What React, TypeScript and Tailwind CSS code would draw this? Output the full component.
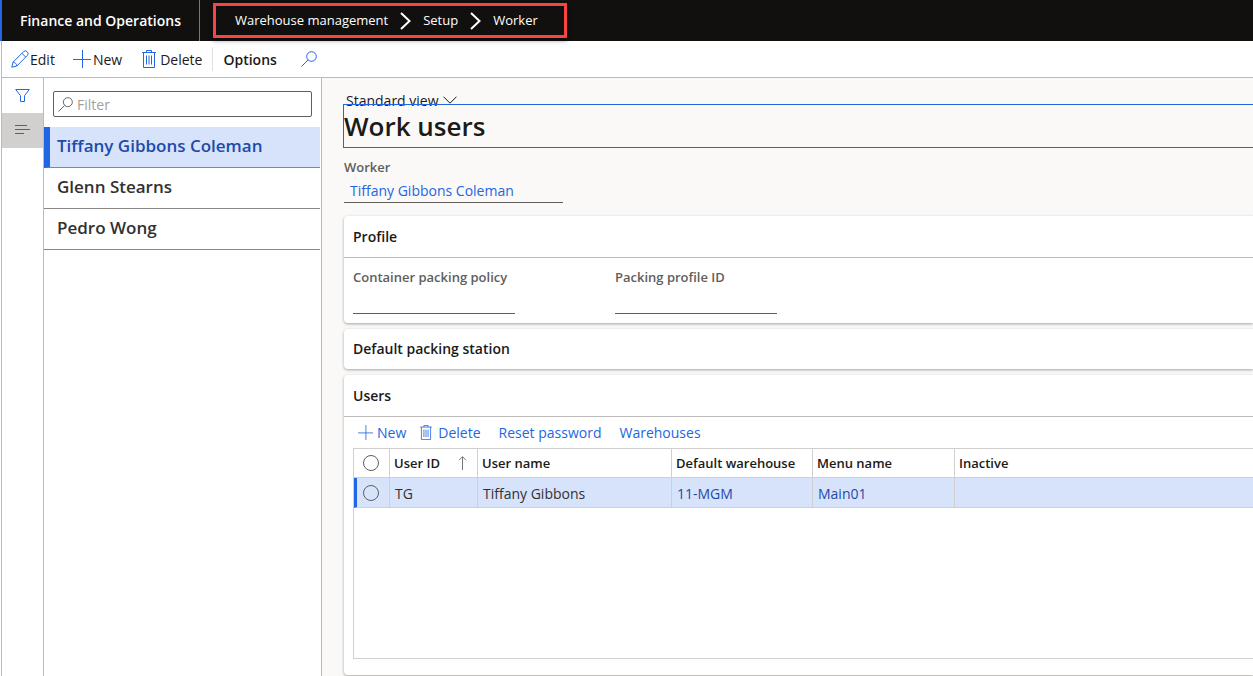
import React, { useState } from 'react';

type IconProps = { className?: string };

const workers = ['Tiffany Gibbons Coleman', 'Glenn Stearns', 'Pedro Wong'];

const users = [
  { id: 'TG', name: 'Tiffany Gibbons', warehouse: '11-MGM', menu: 'Main01', inactive: '' },
];

function PencilIcon({ className }: IconProps) {
  return (
    <svg viewBox="0 0 18 18" fill="none" stroke="currentColor" className={className} aria-hidden="true">
      <path d="M0.8 17.2 2 12.2 12.6 1.6a2.3 2.3 0 0 1 3.3 0l.5.5a2.3 2.3 0 0 1 0 3.3L5.8 16 0.8 17.2ZM2 12.2c2.2.1 3.7 1.6 3.8 3.8M10.9 3.3l3.8 3.8" />
    </svg>
  );
}

function PlusIcon({ className }: IconProps) {
  return (
    <svg viewBox="0 0 18 18" fill="none" stroke="currentColor" className={className} aria-hidden="true">
      <path d="M9.5 0v18M0 9.5h18" />
    </svg>
  );
}

function TrashIcon({ className }: IconProps) {
  return (
    <svg viewBox="0 0 14 18" fill="none" stroke="currentColor" className={className} aria-hidden="true">
      <path d="M0 2.5h14M4.5 2.5v-2h5v2M1.5 2.5v15h11v-15M4.5 5.5v9M7 5.5v9M9.5 5.5v9" />
    </svg>
  );
}

function SearchIcon({ className }: IconProps) {
  return (
    <svg viewBox="0 0 16 16" fill="none" stroke="currentColor" className={className} aria-hidden="true">
      <circle cx="10.5" cy="5.5" r="4.8" />
      <path d="M7.1 8.9.5 15.5" />
    </svg>
  );
}

function FunnelIcon({ className }: IconProps) {
  return (
    <svg viewBox="0 0 15 13" fill="none" stroke="currentColor" className={className} aria-hidden="true">
      <path d="M.7.5h13.6L9.5 6.7v5.8h-4V6.7L.7.5Z" />
    </svg>
  );
}

function LinesIcon({ className }: IconProps) {
  return (
    <svg viewBox="0 0 15 11" className={className} aria-hidden="true">
      <path fill="currentColor" d="M0 0h12v1H0zM0 4h15v1H0zM0 8h9v1H0z" />
    </svg>
  );
}

function ChevronRight({ className }: IconProps) {
  return (
    <svg viewBox="0 0 11 18" fill="none" stroke="currentColor" strokeWidth="2" className={className} aria-hidden="true">
      <path d="M1 1l8.5 8L1 17" />
    </svg>
  );
}

function ChevronDown({ className }: IconProps) {
  return (
    <svg viewBox="0 0 14 8" fill="none" stroke="currentColor" className={className} aria-hidden="true">
      <path d="M.5.7 7 7.2 13.5.7" />
    </svg>
  );
}

function SortIcon({ className }: IconProps) {
  return (
    <svg viewBox="0 0 9 14" fill="none" stroke="currentColor" className={className} aria-hidden="true">
      <path d="M4.5 14V.7M1 4.2 4.5.7 8 4.2" />
    </svg>
  );
}

function Card({ title, open, className, children }: { title: string; open?: boolean; className?: string; children?: React.ReactNode }) {
  return (
    <section className={`rounded-l-sm bg-white shadow-[0_1px_3px_rgba(0,0,0,0.35)] ${className ?? ''}`}>
      <h2 className={`flex items-center px-[9px] text-sm font-semibold ${open ? 'h-[42px] border-b border-[#bdbbb9]' : 'h-10'}`}>
        {title}
      </h2>
      {children}
    </section>
  );
}

function Field({ id, label }: { id: string; label: string }) {
  return (
    <div className="flex w-[162px] flex-col">
      <label htmlFor={id} className="text-[13px] leading-5 font-semibold whitespace-nowrap text-[#605e5c]">{label}</label>
      <input id={id} type="text" className="h-[27px] w-full border-b border-[#605e5c] bg-transparent text-sm outline-none" />
    </div>
  );
}

const headCell = 'border-r border-b border-[#d2d0ce] px-1 text-left font-semibold whitespace-nowrap';
const bodyCell = 'border-r border-b border-[#d2d0ce] px-[5px] pt-0.5';
const tick = 'block size-4 appearance-none rounded-full border border-[#605e5c]';

export default function App() {
  const [selected, setSelected] = useState(workers[0]);
  const [filter, setFilter] = useState('');

  const visible = workers.filter(w => w.toLowerCase().includes(filter.toLowerCase()));

  return (
    <div className="flex min-h-screen flex-col overflow-hidden bg-white font-['Open_Sans','Noto_Sans',sans-serif] text-sm text-[#1b1a19]">
      <header className="flex h-[41px] items-center border-l-2 border-[#2266e3] bg-[#11100f] text-white">
        <div className="flex h-full items-center border-r border-[#797775] px-[18px] text-sm font-semibold">
          Finance and Operations
        </div>
        <nav aria-label="Breadcrumb" className="z-10 ml-[13px] flex h-[35px] items-center gap-3 border-3 border-[#fa4343] pr-[26px] pl-[19px] text-[13px] shadow-[0_3px_4px_rgba(0,0,0,0.35)]">
          <a href="#warehouse">Warehouse management</a>
          <ChevronRight className="h-[18px] w-[11px]" />
          <a href="#setup">Setup</a>
          <ChevronRight className="h-[18px] w-[11px]" />
          <a href="#worker">Worker</a>
        </nav>
      </header>

      <div className="ml-px flex flex-1 flex-col border-l border-[#bdbbb9]">
        <div className="flex h-[37px] items-center border-b border-[#bdbbb9] pl-[9px]">
          <button className="flex items-center gap-px">
            <PencilIcon className="size-[18px] text-[#2266e3]" />
            <span className="pt-0.5">Edit</span>
          </button>
          <button className="ml-[18px] flex items-center gap-0.5">
            <PlusIcon className="size-[18px] text-[#2266e3]" />
            <span className="pt-0.5">New</span>
          </button>
          <button className="ml-5 flex items-center gap-1">
            <TrashIcon className="h-[18px] w-3.5 text-[#2266e3]" />
            <span className="pt-0.5">Delete</span>
          </button>
          <span className="ml-2.5 h-6 w-px bg-[#e1dfdd]" />
          <button className="ml-2.5 pt-0.5 font-semibold">Options</button>
          <button aria-label="Search" className="ml-6 text-[#2266e3]">
            <SearchIcon className="size-4" />
          </button>
        </div>

        <div className="flex flex-1">
          <div className="flex w-[42px] shrink-0 flex-col border-r border-[#bdbbb9]">
            <button aria-label="Show filters" className="flex h-[35px] items-center justify-center">
              <FunnelIcon className="h-[13px] w-[15px] text-[#2266e3]" />
            </button>
            <button aria-label="Show list" className="flex h-[35px] items-center justify-center bg-[#d2d0ce]">
              <LinesIcon className="h-[11px] w-[15px] text-[#2266e3]" />
            </button>
          </div>

          <aside className="w-[278px] shrink-0 border-r border-[#bdbbb9] pr-px">
            <div className="mt-[13px] mr-2 mb-[10px] ml-[9px] flex h-[26px] items-center gap-1 rounded-xs border border-[#605e5c] px-1">
              <SearchIcon className="size-[15px] shrink-0 text-[#605e5c]" />
              <input
                aria-label="Filter"
                placeholder="Filter"
                value={filter}
                onChange={(e) => setFilter(e.target.value)}
                className="w-full bg-transparent pt-0.5 text-sm outline-none placeholder:text-[#a19f9d]"
              />
            </div>
            <ul>
              {visible.map(worker => (
                <li key={worker}>
                  <button
                    onClick={() => setSelected(worker)}
                    className={`flex h-[41px] w-full items-center border-b border-b-[#8a8886] pb-0.5 text-[17px] font-semibold ${
                      worker === selected ? 'border-l-6 border-l-[#2266e3] bg-[#d7e3fb] pl-[7px] text-[#1e4aa8]' : 'pl-[13px] text-[#323130]'
                    }`}
                  >
                    {worker}
                  </button>
                </li>
              ))}
            </ul>
          </aside>

          <main className="flex min-w-0 flex-1 flex-col bg-[#faf9f8] pl-[21px]">
            <button className="mt-3 ml-[3px] flex h-5 items-center gap-1 self-start">
              <span className="pt-0.5">Standard view</span>
              <ChevronDown className="h-2 w-3.5" />
            </button>
            <h1 className="-mt-1.5 flex h-11 items-center border border-r-0 border-[#2266e3] pt-0.5 text-[26px] font-semibold">Work users</h1>

            <div className="mt-[9px] ml-px">
              <div className="text-[13px] leading-5 font-semibold text-[#605e5c]">Worker</div>
              <div className="flex h-[26px] w-[219px] items-center border-b border-[#605e5c] pt-0.5 pl-1.5">
                <a href="#tiffany" className="text-[#2266e3]">Tiffany Gibbons Coleman</a>
              </div>
            </div>

            <div className="mt-[13px] ml-px flex flex-1 flex-col gap-1.5 pb-px">
              <Card title="Profile" open>
                <div className="flex gap-[100px] p-[9px]">
                  <Field id="policy" label="Container packing policy" />
                  <Field id="profile" label="Packing profile ID" />
                </div>
              </Card>

              <Card title="Default packing station" />

              <Card title="Users" open className="flex flex-1 flex-col">
                <div className="flex h-[31px] items-center gap-[18px] pl-3.5 text-[#2266e3]">
                  <div className="flex gap-3.5">
                    <button className="flex items-center gap-1">
                      <PlusIcon className="size-[15px]" />
                      New
                    </button>
                    <button className="flex items-center gap-1.5">
                      <TrashIcon className="h-[15px] w-3" />
                      Delete
                    </button>
                  </div>
                  <button>Reset password</button>
                  <button>Warehouses</button>
                </div>
                <div className="mb-4 ml-[9px] flex-1 border border-r-0 border-[#d2d0ce]">
                  <table className="w-full table-fixed border-separate border-spacing-0">
                    <colgroup>
                      <col className="w-9" />
                      <col className="w-[88px]" />
                      <col className="w-[194px]" />
                      <col className="w-[141px]" />
                      <col className="w-[142px]" />
                      <col />
                    </colgroup>
                    <thead>
                      <tr className="h-[29px] text-[13px]">
                        <th className={`${headCell} pl-[9px]`}>
                          <input type="checkbox" aria-label="Select all" className={tick} />
                        </th>
                        <th className={headCell}>
                          <span className="flex items-center justify-between pr-1.5">
                            User ID
                            <SortIcon className="h-3.5 w-[9px] text-[#797775]" />
                          </span>
                        </th>
                        <th className={headCell}>User name</th>
                        <th className={headCell}>Default warehouse</th>
                        <th className={headCell}>Menu name</th>
                        <th className={`${headCell} border-r-0`}>Inactive</th>
                      </tr>
                    </thead>
                    <tbody>
                      {users.map(user => (
                        <tr key={user.id} className="h-[30px] bg-[#d7e3fb] text-[#323130]">
                          <td className="border-r border-b border-l-3 border-[#d2d0ce] border-l-[#2266e3] pl-1.5">
                            <input type="checkbox" aria-label={`Select ${user.name}`} className={tick} />
                          </td>
                          <td className={bodyCell}>{user.id}</td>
                          <td className={bodyCell}>{user.name}</td>
                          <td className={bodyCell}><a href="#warehouse-11" className="text-[#1e4aa8]">{user.warehouse}</a></td>
                          <td className={bodyCell}><a href="#menu-main" className="text-[#1e4aa8]">{user.menu}</a></td>
                          <td className={`${bodyCell} border-r-0`}>{user.inactive}</td>
                        </tr>
                      ))}
                    </tbody>
                  </table>
                </div>
              </Card>
            </div>
          </main>
        </div>
      </div>
    </div>
  );
}
